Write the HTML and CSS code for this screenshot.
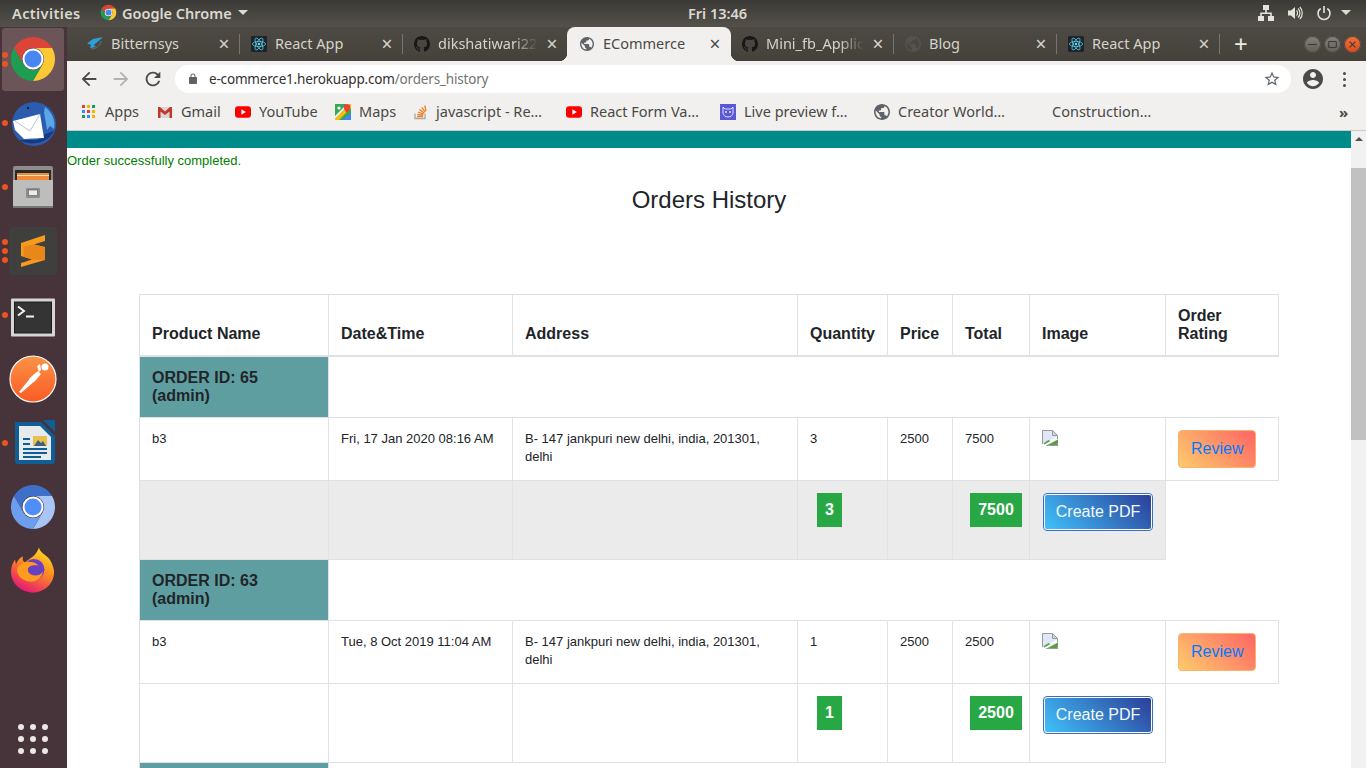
FILE: index.html
```html
<!DOCTYPE html>
<html>

<head>
    <meta charset="utf-8">
    <title>ECommerce</title>

    <link rel="stylesheet" href="styles.css">
</head>

<body>

    <svg class="icon-defs" width="0" height="0">
        <symbol id="i-chrome" viewBox="0 0 48 48">
            <path fill="#db4437" d="M4.95 13A22 22 0 0 1 43.05 13H24A11 11 0 0 0 14.47 29.5z" />
            <path fill="#fcc934" d="M43.05 13A22 22 0 0 1 24 46L33.53 29.5A11 11 0 0 0 24 13z" />
            <path fill="#1e9e50" d="M24 46A22 22 0 0 1 4.95 13L14.47 29.5A11 11 0 0 0 33.53 29.5z" />
            <circle cx="24" cy="24" r="10.5" fill="#fff" />
            <circle cx="24" cy="24" r="8.5" fill="#4a86f0" />
        </symbol>
        <symbol id="i-chromium" viewBox="0 0 48 48">
            <path fill="#3f70c9" d="M4.95 13A22 22 0 0 1 43.05 13H24A11 11 0 0 0 14.47 29.5z" />
            <path fill="#a8c5f6" d="M43.05 13A22 22 0 0 1 24 46L33.53 29.5A11 11 0 0 0 24 13z" />
            <path fill="#6d9eee" d="M24 46A22 22 0 0 1 4.95 13L14.47 29.5A11 11 0 0 0 33.53 29.5z" />
            <circle cx="24" cy="24" r="10.5" fill="#fff" />
            <circle cx="24" cy="24" r="8.5" fill="#4f8ef7" />
        </symbol>
        <symbol id="i-github" viewBox="0 0 16 16">
            <path fill="#17171a" d="M8 0C3.58 0 0 3.58 0 8c0 3.54 2.29 6.53 5.47 7.59.4.07.55-.17.55-.38 0-.19-.01-.82-.01-1.49-2.01.37-2.53-.49-2.69-.94-.09-.23-.48-.94-.82-1.13-.28-.15-.68-.52-.01-.53.63-.01 1.08.58 1.23.82.72 1.21 1.87.87 2.33.66.07-.52.28-.87.51-1.07-1.78-.2-3.64-.89-3.64-3.95 0-.87.31-1.59.82-2.15-.08-.2-.36-1.02.08-2.12 0 0 .67-.21 2.2.82.64-.18 1.32-.27 2-.27.68 0 1.36.09 2 .27 1.53-1.04 2.2-.82 2.2-.82.44 1.1.16 1.92.08 2.12.51.56.82 1.27.82 2.15 0 3.07-1.87 3.75-3.65 3.95.29.25.54.73.54 1.48 0 1.07-.01 1.93-.01 2.2 0 .21.15.46.55.38A8.013 8.013 0 0016 8c0-4.42-3.58-8-8-8z" />
        </symbol>
        <symbol id="i-react" viewBox="0 0 16 16">
            <rect width="16" height="16" rx="1" fill="#20232a" />
            <g fill="none" stroke="#61dafb" stroke-width=".7">
                <ellipse cx="8" cy="8" rx="6.6" ry="2.6" />
                <ellipse cx="8" cy="8" rx="6.6" ry="2.6" transform="rotate(60 8 8)" />
                <ellipse cx="8" cy="8" rx="6.6" ry="2.6" transform="rotate(120 8 8)" />
            </g>
            <circle cx="8" cy="8" r="1.3" fill="#61dafb" />
        </symbol>
        <symbol id="i-globe" viewBox="2 2 20 20">
            <path d="M12 2C6.48 2 2 6.48 2 12s4.48 10 10 10 10-4.48 10-10S17.52 2 12 2zm-1 17.93c-3.95-.49-7-3.85-7-7.93 0-.62.08-1.21.21-1.79L9 15v1c0 1.1.9 2 2 2v1.93zm6.9-2.54c-.26-.81-1-1.39-1.9-1.39h-1v-3c0-.55-.45-1-1-1H8v-2h2c.55 0 1-.45 1-1V7h2c1.1 0 2-.9 2-2v-.41c2.93 1.19 5 4.06 5 7.41 0 2.08-.8 3.97-2.1 5.39z" />
        </symbol>
        <symbol id="i-youtube" viewBox="0 0 16 16">
            <rect y="2.2" width="16" height="11.6" rx="3" fill="#f00" />
            <path fill="#fff" d="M6.4 5.3 10.8 8l-4.4 2.7z" />
        </symbol>
        <symbol id="i-broken" viewBox="0 0 16 16">
            <path fill="#c6d6f1" d="M0 0h10.5L16 5.500V16H0z" />
            <path fill="#fff" d="M1 1h9v5h5v1L1 12z" opacity=".45" />
            <path fill="#fff" d="M0 14 16 6v3L3 16H0z" />
            <path fill="#5f9e3e" d="M4 16l12-6.500V16zM1.500 13.500l5-3.500 2 1-6 3.500z" />
            <path fill="none" stroke="#9b9b9b" d="M.5 14V.5h10l5 5V9M15.500 13v2.500H6M10.500.5v5h5" />
        </symbol>
    </svg>

    <div class="screen">

        <header class="topbar">
            <span class="topbar-activities">Activities</span>
            <span class="topbar-app">
                <svg class="topbar-logo"><use href="#i-chrome" /></svg>
                Google Chrome
                <i class="caret"></i>
            </span>
            <span class="topbar-clock">Fri 13:46</span>
            <span class="topbar-status">
                <svg class="status-icon" viewBox="0 0 16 16" fill="#e6e3dc">
                    <path d="M5 0h6v5H8.800v2.500h5V11H16v5h-6v-5h2.200V9H3.800v2H6v5H0v-5h2.200V7.500h5V5H5z" />
                </svg>
                <svg class="status-icon" viewBox="0 0 16 16" fill="#e6e3dc">
                    <path d="M1 5.500h3L8 2v12l-4-3.500H1z" />
                    <path d="M9.500 5.500c1.400 1.200 1.400 3.800 0 5M11 3.500c2.600 2.300 2.600 6.700 0 9M12.800 2c3.300 3 3.300 9 0 12" fill="none" stroke="#e6e3dc" stroke-width="1.200" />
                </svg>
                <svg class="status-icon" viewBox="0 0 16 16" fill="none" stroke="#e6e3dc" stroke-width="1.600">
                    <path d="M4.700 3.500a6 6 0 1 0 6.600 0M8 1v7" />
                </svg>
                <i class="caret"></i>
            </span>
        </header>

        <div class="desktop">

            <aside class="dock">
                <div class="dock-item is-running">
                    <i class="dot dot-a"></i><i class="dot dot-b"></i>
                    <svg class="dock-icon"><use href="#i-chrome" /></svg>
                </div>
                <div class="dock-item">
                    <i class="dot"></i>
                    <svg class="dock-icon" viewBox="0 0 48 48">
                        <circle cx="25" cy="25" r="22" fill="#2a5db0" />
                        <path fill="#17397f" d="M10 41c10 6 28 5 35-9l-9 3-8 6z" />
                        <path fill="#5aa6e6" d="M36 8c7 5 11 14 9 22l-4-3-3 4-3-18z" />
                        <path fill="#fff" d="M4 22 31 15l4 24-20 1-9-9z" />
                        <path fill="none" stroke="#b9c4d2" d="M6 22l15 10 10-17" />
                        <path fill="#2a5db0" d="M9 12c4-8 15-9 21-5l-7 7-11 6z" />
                        <circle cx="19" cy="9" r="1.200" fill="#0c1d3c" />
                    </svg>
                </div>
                <div class="dock-item">
                    <i class="dot"></i>
                    <svg class="dock-icon" viewBox="0 0 48 48">
                        <rect x="4" y="3" width="40" height="42" rx="2" fill="#8d8d8d" />
                        <rect x="6" y="7" width="36" height="14" fill="#2b2a28" />
                        <rect x="8" y="10" width="32" height="8" fill="#ec8b3a" />
                        <rect x="8" y="12" width="32" height="1" fill="#fbe0b8" />
                        <rect x="4" y="17" width="40" height="28" fill="#bdbdbb" />
                        <rect x="4" y="43" width="40" height="2" fill="#77777a" />
                        <rect x="17" y="25" width="14" height="10" rx="1" fill="#8e8e8e" />
                        <rect x="19.500" y="27" width="9" height="5.500" fill="#ececec" stroke="#55555a" stroke-width=".6" />
                    </svg>
                </div>
                <div class="dock-item">
                    <i class="dot dot-top"></i><i class="dot"></i><i class="dot dot-bottom"></i>
                    <svg class="dock-icon" viewBox="0 0 48 48">
                        <rect width="48" height="48" rx="4" fill="#3f3f3e" />
                        <path fill="#f79a1e" d="M36 8 12 16V29L23 32.500 12 36V40L36 33V20L25 17.500 36 14z" />
                        <path fill="#e8871a" d="M14.500 19.500 25 17.500 36 20V33L23 32.500 14.500 29.800z" />
                    </svg>
                </div>
                <div class="dock-item">
                    <i class="dot"></i>
                    <svg class="dock-icon" viewBox="0 -2.500 48 48">
                        <rect x="2" y="5" width="44" height="38" rx="1" fill="#d6d6d4" />
                        <rect x="5" y="8" width="38" height="32" fill="#1c1c1c" />
                        <rect x="6" y="9" width="36" height="30" fill="#343434" />
                        <path fill="none" stroke="#f2f2f2" stroke-width="2" d="M9 13l6 4.500-6 4.500" />
                        <rect x="17" y="22" width="8" height="2" fill="#f2f2f2" />
                    </svg>
                </div>
                <div class="dock-item">
                    <svg class="dock-icon" viewBox="0 0 48 48">
                        <defs>
                            <linearGradient id="g-postman" x1="0" y1="0" x2="0" y2="1">
                                <stop offset="0" stop-color="#fb9346" />
                                <stop offset="1" stop-color="#fb5b24" />
                            </linearGradient>
                        </defs>
                        <circle cx="24" cy="24" r="23" fill="url(#g-postman)" stroke="#fff" stroke-width="1.200" />
                        <path fill="#fff" d="M10 37l13-16 6-5 3 3-5 6-15 13zM28 11l3-2 1 6-2 2zM23 21l4 4-2 2-5-3z" />
                        <circle cx="36" cy="12" r="3.500" fill="#fff" />
                    </svg>
                </div>
                <div class="dock-item">
                    <i class="dot"></i>
                    <svg class="dock-icon" viewBox="0 0 48 48">
                        <path fill="#0f5f96" d="M6 3h26l14 14v25a3 3 0 0 1-3 3H9a3 3 0 0 1-3-3z" />
                        <path fill="#0f5f96" d="M34 1h12v12z" />
                        <path fill="#e8ebee" d="M10 7h21l11 11v23H10z" />
                        <path fill="#0f5f96" d="M14 19h7v2h-7zM14 24h7v2h-7zM14 29h24v2H14zM14 33h24v2H14zM14 37h18v2H14z" />
                        <rect x="24" y="17" width="14" height="10" fill="#e8c04c" />
                        <path fill="#3e5f7f" d="M25 27l4-6 3 3 2-2 3 5z" />
                    </svg>
                </div>
                <div class="dock-item">
                    <svg class="dock-icon"><use href="#i-chromium" /></svg>
                </div>
                <div class="dock-item">
                    <svg class="dock-icon" viewBox="0 1.500 48 48">
                        <defs>
                            <linearGradient id="g-fox" x1="0.800" y1="0" x2="0.300" y2="1">
                                <stop offset="0" stop-color="#ffe226" />
                                <stop offset=".45" stop-color="#ff8a1f" />
                                <stop offset="1" stop-color="#e3137a" />
                            </linearGradient>
                        </defs>
                        <path fill="url(#g-fox)" d="M30 2c1 5 5 6 9 10 3 3 5 8 6 13 1 12-9 22-21 22C12 47 2 38 2 26c0-5 2-9 4-12l1 5c1-4 4-7 7-8-1 3 0 5 2 6 4-4 11-6 14-15z" />
                        <circle cx="25" cy="24" r="10.500" fill="#6a3fc2" />
                        <path fill="#ff9c1f" d="M8 24c2-7 10-9 17-7l5 3c-6-1-10 0-11 3-1 4 3 7 7 7 3 0 6-1 8-4-1 7-8 11-14 10C13 35 8 30 8 24z" />
                    </svg>
                </div>
                <div class="dock-apps">
                    <i></i><i></i><i></i><i></i><i></i><i></i><i></i><i></i><i></i>
                </div>
            </aside>

            <div class="chrome-window">

                <div class="tabstrip">
                    <div class="tab tab-first">
                        <svg class="tab-icon" viewBox="0 0 16 16">
                            <path fill="#2c9fd8" d="M16 1 6 3 0 7.500l4 1.300L3 12c3 0 5-1 6-2l-2.500-.5C9 7 13 4 16 1z" />
                            <path fill="none" stroke="#5d7f92" stroke-width=".8" d="M14 5c-1 5-5 8-10 8" />
                        </svg>
                        <span class="tab-title">Bitternsys</span>
                        <span class="tab-close">×</span>
                    </div>
                    <div class="tab">
                        <svg class="tab-icon"><use href="#i-react" /></svg>
                        <span class="tab-title">React App</span>
                        <span class="tab-close">×</span>
                    </div>
                    <div class="tab tab-before-active">
                        <svg class="tab-icon"><use href="#i-github" /></svg>
                        <span class="tab-title tab-fade">dikshatiwari22</span>
                        <span class="tab-close">×</span>
                    </div>
                    <div class="tab tab-active">
                        <svg class="tab-icon tab-globe"><use href="#i-globe" /></svg>
                        <span class="tab-title">ECommerce</span>
                        <span class="tab-close">×</span>
                    </div>
                    <div class="tab">
                        <svg class="tab-icon"><use href="#i-github" /></svg>
                        <span class="tab-title tab-fade">Mini_fb_Applic</span>
                        <span class="tab-close">×</span>
                    </div>
                    <div class="tab">
                        <svg class="tab-icon tab-globe-dim"><use href="#i-globe" /></svg>
                        <span class="tab-title">Blog</span>
                        <span class="tab-close">×</span>
                    </div>
                    <div class="tab">
                        <svg class="tab-icon"><use href="#i-react" /></svg>
                        <span class="tab-title">React App</span>
                        <span class="tab-close">×</span>
                    </div>
                    <span class="tab-new">+</span>
                    <div class="window-buttons">
                        <span class="window-button">
                            <svg viewBox="0 0 20 20"><path d="M5 10h10" /></svg>
                        </span>
                        <span class="window-button">
                            <svg viewBox="0 0 20 20"><rect x="5.500" y="6.500" width="9" height="7" rx="1" /></svg>
                        </span>
                        <span class="window-button window-close">
                            <svg viewBox="0 0 20 20"><path d="M6.500 6.500l7 7M13.500 6.500l-7 7" /></svg>
                        </span>
                    </div>
                </div>

                <div class="toolbar">
                    <svg class="tool-icon" viewBox="0 0 24 24"><path d="M20 11H7.830l5.590-5.590L12 4l-8 8 8 8 1.410-1.410L7.830 13H20v-2z" /></svg>
                    <svg class="tool-icon tool-disabled" viewBox="0 0 24 24"><path d="M12 4l-1.410 1.410L16.170 11H4v2h12.170l-5.580 5.590L12 20l8-8z" /></svg>
                    <svg class="tool-icon" viewBox="0 0 24 24"><path d="M17.650 6.350C16.200 4.900 14.210 4 12 4c-4.420 0-7.990 3.580-7.990 8s3.570 8 7.990 8c3.730 0 6.840-2.550 7.730-6h-2.080c-.82 2.330-3.040 4-5.650 4-3.310 0-6-2.690-6-6s2.690-6 6-6c1.660 0 3.140.69 4.220 1.780L13 11h7V4l-2.350 2.350z" /></svg>
                    <div class="omnibox">
                        <svg class="omnibox-lock" viewBox="0 0 24 24"><path d="M18 8h-1V6c0-2.760-2.240-5-5-5S7 3.240 7 6v2H6c-1.100 0-2 .9-2 2v10c0 1.100.9 2 2 2h12c1.100 0 2-.9 2-2V10c0-1.100-.9-2-2-2zM9 6c0-1.660 1.340-3 3-3s3 1.340 3 3v2H9V6z" /></svg>
                        <span class="omnibox-url">e-commerce1.herokuapp.com<span class="omnibox-path">/orders_history</span></span>
                        <svg class="omnibox-star" viewBox="0 0 24 24"><path d="M22 9.240l-7.190-.62L12 2 9.190 8.630 2 9.240l5.460 4.730L5.820 21 12 17.270 18.180 21l-1.630-7.030L22 9.240zM12 15.400l-3.760 2.270 1-4.280-3.320-2.880 4.380-.38L12 6.100l1.710 4.040 4.380.38-3.320 2.880 1 4.280L12 15.400z" /></svg>
                    </div>
                    <svg class="tool-avatar" viewBox="2 2 20 20"><path d="M12 2C6.480 2 2 6.480 2 12s4.480 10 10 10 10-4.480 10-10S17.520 2 12 2zm0 3c1.660 0 3 1.340 3 3s-1.340 3-3 3-3-1.340-3-3 1.340-3 3-3zm0 14.200c-2.500 0-4.710-1.280-6-3.220.03-1.990 4-3.080 6-3.080 1.990 0 5.970 1.090 6 3.080-1.290 1.940-3.500 3.220-6 3.220z" /></svg>
                    <div class="tool-menu"><i></i><i></i><i></i></div>
                </div>

                <div class="bookmarks">
                    <span class="bookmark">
                        <svg class="bookmark-icon" viewBox="0 0 16 16">
                            <g fill="#db4437"><rect x="1" y="1" width="3" height="3" /><rect x="6" y="1" width="3" height="3" fill="#f4b400" /><rect x="11" y="1" width="3" height="3" fill="#0f9d58" /></g>
                            <g fill="#4285f4"><rect x="1" y="6" width="3" height="3" /><rect x="6" y="6" width="3" height="3" fill="#db4437" /><rect x="11" y="6" width="3" height="3" fill="#f4b400" /></g>
                            <g fill="#0f9d58"><rect x="1" y="11" width="3" height="3" /><rect x="6" y="11" width="3" height="3" fill="#4285f4" /><rect x="11" y="11" width="3" height="3" fill="#f4b400" /></g>
                        </svg>
                        <span class="bookmark-label">Apps</span>
                    </span>
                    <span class="bookmark">
                        <svg class="bookmark-icon" viewBox="0 0 16 16">
                            <path fill="#d8d8d8" d="M2 3h12v11H2z" />
                            <path fill="#c5362b" d="M1 3h2l5 4.500L13 3h2v11h-2.500V7.500L8 11 3.500 7.500V14H1z" />
                        </svg>
                        <span class="bookmark-label">Gmail</span>
                    </span>
                    <span class="bookmark">
                        <svg class="bookmark-icon"><use href="#i-youtube" /></svg>
                        <span class="bookmark-label">YouTube</span>
                    </span>
                    <span class="bookmark">
                        <svg class="bookmark-icon" viewBox="0 0 16 16">
                            <rect width="16" height="16" fill="#34a853" />
                            <path fill="#f1f1f1" d="M0 12 12 0h3L0 15z" />
                            <path fill="#fbbc04" d="M0 15 15 0h1v4L4 16H0z" />
                            <path fill="#4285f4" d="M7 16l9-7v7z" />
                            <path fill="#ea4335" d="M12 0a3.200 3.200 0 0 0-3.200 3.200C8.800 5.600 12 9 12 9s3.200-3.400 3.200-5.800A3.200 3.200 0 0 0 12 0z" />
                            <circle cx="4" cy="4" r="1.600" fill="#fff" />
                        </svg>
                        <span class="bookmark-label">Maps</span>
                    </span>
                    <span class="bookmark">
                        <svg class="bookmark-icon bookmark-stack" viewBox="1.500 0 14 16">
                            <path fill="none" stroke="#a8a8a8" stroke-width="1.300" d="M2.500 9.500v5h10v-5" />
                            <path fill="none" stroke="#f48024" stroke-width="1.300" d="M4.500 12.500h6M4.800 10.300l5.900.9M5.500 8l5.500 2.200M7 5.600l4.700 3.400M9.300 3.400l3.400 4.600M12.300 1.500l1.200 5.500" />
                        </svg>
                        <span class="bookmark-label">javascript - Re…</span>
                    </span>
                    <span class="bookmark">
                        <svg class="bookmark-icon"><use href="#i-youtube" /></svg>
                        <span class="bookmark-label">React Form Va…</span>
                    </span>
                    <span class="bookmark">
                        <svg class="bookmark-icon" viewBox="0 0 16 16">
                            <rect width="16" height="16" fill="#5b58d6" />
                            <path fill="none" stroke="#dfe0ff" d="M3 3l2 2h6l2-2v6c0 2-2 4-5 4s-5-2-5-4z" />
                            <circle cx="6" cy="8" r="1" fill="#dfe0ff" /><circle cx="10" cy="8" r="1" fill="#dfe0ff" />
                        </svg>
                        <span class="bookmark-label">Live preview f…</span>
                    </span>
                    <span class="bookmark">
                        <svg class="bookmark-icon tab-globe"><use href="#i-globe" /></svg>
                        <span class="bookmark-label">Creator World…</span>
                    </span>
                    <span class="bookmark"><span class="bookmark-label">Construction…</span></span>
                    <span class="bookmark-more">»</span>
                </div>

                <div class="viewport">
                    <main class="page">
                        <div class="page-banner"></div>
                        <p class="flash-message">Order successfully completed.</p>
                        <h2 class="page-title">Orders History</h2>

                        <table class="orders">
                            <colgroup>
                                <col class="col-name">
                                <col class="col-date">
                                <col class="col-address">
                                <col class="col-qty">
                                <col class="col-price">
                                <col class="col-total">
                                <col class="col-image">
                                <col class="col-rating">
                            </colgroup>
                            <thead>
                                <tr>
                                    <th>Product Name</th>
                                    <th>Date&amp;Time</th>
                                    <th>Address</th>
                                    <th>Quantity</th>
                                    <th>Price</th>
                                    <th>Total</th>
                                    <th>Image</th>
                                    <th>Order Rating</th>
                                </tr>
                            </thead>
                            <tbody>
                                <tr class="order-row">
                                    <td>ORDER ID: 65 (admin)</td>
                                </tr>
                                <tr class="item-row">
                                    <td>b3</td>
                                    <td>Fri, 17 Jan 2020 08:16 AM</td>
                                    <td>B- 147 jankpuri new delhi, india, 201301, delhi</td>
                                    <td>3</td>
                                    <td>2500</td>
                                    <td>7500</td>
                                    <td><svg class="broken-image"><use href="#i-broken" /></svg></td>
                                    <td><button class="btn-review">Review</button></td>
                                </tr>
                                <tr class="summary-row summary-shaded">
                                    <td></td>
                                    <td></td>
                                    <td></td>
                                    <td><span class="badge">3</span></td>
                                    <td></td>
                                    <td><span class="badge">7500</span></td>
                                    <td><button class="btn-pdf">Create PDF</button></td>
                                </tr>
                                <tr class="order-row">
                                    <td>ORDER ID: 63 (admin)</td>
                                </tr>
                                <tr class="item-row">
                                    <td>b3</td>
                                    <td>Tue, 8 Oct 2019 11:04 AM</td>
                                    <td>B- 147 jankpuri new delhi, india, 201301, delhi</td>
                                    <td>1</td>
                                    <td>2500</td>
                                    <td>2500</td>
                                    <td><svg class="broken-image"><use href="#i-broken" /></svg></td>
                                    <td><button class="btn-review">Review</button></td>
                                </tr>
                                <tr class="summary-row">
                                    <td></td>
                                    <td></td>
                                    <td></td>
                                    <td><span class="badge">1</span></td>
                                    <td></td>
                                    <td><span class="badge">2500</span></td>
                                    <td><button class="btn-pdf">Create PDF</button></td>
                                </tr>
                                <tr class="order-row">
                                    <td>&nbsp;</td>
                                </tr>
                            </tbody>
                        </table>
                    </main>

                    <div class="scrollbar">
                        <i class="scrollbar-up"></i>
                        <div class="scrollbar-thumb"></div>
                    </div>
                </div>

            </div>
        </div>
    </div>

</body>

</html>
```

FILE: styles.css
```css
* {
    box-sizing: border-box;
}

html,
body {
    margin: 0;
    height: 100%;
    overflow: hidden;
}

body {
    font-family: "Liberation Sans", Arial, sans-serif;
    color: #212529;
}

.icon-defs {
    position: absolute;
}

.screen {
    display: flex;
    flex-direction: column;
    width: 1366px;
    height: 768px;
    overflow: hidden;
}

/* Ubuntu top bar */

.topbar {
    display: flex;
    align-items: center;
    flex: 0 0 27px;
    position: relative;
    padding: 0 15px 2px 12px;
    background: linear-gradient(#3b3a36, #54514b);
    color: #dcd9d1;
    font-family: "Noto Sans", sans-serif;
    font-size: 14.5px;
    font-weight: 600;
}

.topbar-activities {
    width: 88px;
    letter-spacing: .4px;
}

.topbar-app {
    display: flex;
    align-items: center;
}

.topbar-logo {
    width: 17px;
    height: 17px;
    margin-right: 5px;
}

.topbar-clock {
    position: absolute;
    left: 688px;
}

.topbar-status {
    display: flex;
    align-items: center;
    gap: 13px;
    margin-left: auto;
}

.status-icon {
    width: 16px;
    height: 16px;
}

.caret {
    width: 0;
    height: 0;
    margin-left: 6px;
    border: 5px solid transparent;
    border-top-color: #dcd9d1;
    border-bottom: 0;
}

.topbar-status .caret {
    margin-left: -4px;
}

.desktop {
    display: flex;
    flex: 1;
    min-height: 0;
}

/* Dock */

.dock {
    display: flex;
    flex-direction: column;
    flex: 0 0 67px;
    background: #47333a;
}

.dock-item {
    display: flex;
    justify-content: center;
    align-items: center;
    position: relative;
    flex: 0 0 64px;
    margin-right: 1px;
}

.dock-item.is-running::before {
    content: "";
    position: absolute;
    left: 2px;
    right: 2px;
    top: 1px;
    bottom: 0;
    border-radius: 3px;
    background: #6b5558;
}

.dock-icon {
    position: relative;
    width: 48px;
    height: 48px;
}

.dot {
    position: absolute;
    left: 2px;
    top: 29px;
    width: 6px;
    height: 6px;
    border-radius: 50%;
    background: #e95420;
    z-index: 1;
}

.dot-a {
    top: 25px;
}

.dot-b {
    top: 34px;
}

.dot-top {
    top: 20px;
}

.dot-bottom {
    top: 38px;
}

.dock-apps {
    display: grid;
    grid-template-columns: repeat(3, 6px);
    gap: 6px;
    margin: auto 0 14px 18px;
}

.dock-apps i {
    width: 6px;
    height: 6px;
    border-radius: 50%;
    background: #ebe8e6;
}

/* Browser window */

.chrome-window {
    display: flex;
    flex-direction: column;
    flex: 1;
    min-width: 0;
}

.tabstrip {
    display: flex;
    align-items: center;
    flex: 0 0 34px;
    padding-left: 10px;
    background: linear-gradient(#4d4a44, #44423b);
    font-family: "Noto Sans", sans-serif;
    font-size: 14.5px;
    color: #d6d3ca;
}

.tab {
    display: flex;
    align-items: center;
    position: relative;
    flex: 0 0 163px;
    min-width: 0;
    height: 20px;
    padding-left: 11px;
    border-right: 1px solid #77746d;
}

.tab-first {
    padding-left: 10px;
}

.tab-before-active {
    border-right: 0;
}

.tab-before-active .tab-close {
    margin-right: 6px;
}

.tab-active {
    flex-basis: 164px;
    height: 34px;
    margin-left: 1px;
    padding-left: 13px;
    border-right: 0;
    border-radius: 8px 8px 0 0;
    background: #f1f0ee;
    color: #4c4a48;
}

.tab-active .tab-icon {
    width: 14px;
    height: 14px;
    margin-right: 9px;
}

.tab-active .tab-close {
    margin-right: 8px;
}

.tab-active::before,
.tab-active::after {
    content: "";
    position: absolute;
    bottom: 0;
    width: 8px;
    height: 8px;
    background: radial-gradient(circle at 0 0, #45433c 8px, #f1f0ee 8.5px);
}

.tab-active::before {
    left: -8px;
}

.tab-active::after {
    right: -8px;
    background: radial-gradient(circle at 100% 0, #45433c 8px, #f1f0ee 8.5px);
}

.tab-icon {
    flex: none;
    width: 16px;
    height: 16px;
    margin-right: 8px;
}

.tab-globe {
    fill: #5f6368;
}

.tab-globe-dim {
    fill: #54524c;
}

.tab-title {
    flex: 1;
    min-width: 0;
    padding-bottom: 2px;
    overflow: hidden;
    white-space: nowrap;
}

.tab-fade {
    -webkit-mask-image: linear-gradient(to right, #000 75%, transparent 100%);
    mask-image: linear-gradient(to right, #000 75%, transparent 100%);
}

.tab-close {
    flex: none;
    width: 16px;
    margin: 0 7px 0 6px;
    text-align: center;
    font-size: 19px;
    line-height: 20px;
}

.tab-new {
    margin-left: 14px;
    font-size: 24px;
    line-height: 20px;
    color: #ecebe6;
}

.window-buttons {
    display: flex;
    gap: 3px;
    margin-left: auto;
    padding-right: 5px;
}

.window-button {
    width: 17px;
    height: 17px;
    border-radius: 50%;
    background: linear-gradient(#85827b, #5e5c55);
    box-shadow: inset 0 0 0 1px #4a4841;
}

.window-button svg {
    display: block;
    fill: none;
    stroke: #3b3a36;
    stroke-width: 1.300;
}

.window-close {
    background: linear-gradient(#f0703c, #d94d1c);
}

.toolbar {
    display: flex;
    align-items: center;
    flex: 0 0 32px;
    padding-top: 4px;
    background: #f1f0ee;
}

.tool-icon {
    flex: none;
    width: 22px;
    height: 22px;
    margin-left: 10px;
    fill: #4a4a4a;
}

.toolbar .tool-icon:first-child {
    margin-left: 11px;
}

.tool-disabled {
    fill: #b2b2b2;
}

.omnibox {
    display: flex;
    align-items: center;
    flex: 1;
    height: 28px;
    margin-left: 11px;
    padding: 0 10px 0 12px;
    border-radius: 14px;
    background: #fff;
    font-family: "Noto Sans", sans-serif;
    font-size: 13.5px;
    letter-spacing: -.18px;
}

.omnibox-lock {
    width: 12px;
    height: 14px;
    margin-right: 10px;
    fill: #5f6368;
}

.omnibox-url {
    flex: 1;
    color: #34322f;
}

.omnibox-path {
    color: #75736f;
}

.omnibox-star {
    width: 18px;
    height: 18px;
    fill: #5f6368;
}

.tool-avatar {
    flex: none;
    width: 20px;
    height: 20px;
    margin-left: 12px;
    fill: #4a4a4a;
}

.tool-menu {
    display: flex;
    flex-direction: column;
    gap: 3px;
    margin: 0 20px 0 20px;
}

.tool-menu i {
    width: 3px;
    height: 3px;
    border-radius: 50%;
    background: #4a4a4a;
}

.bookmarks {
    display: grid;
    grid-template-columns: 76px 78px 100px 79px 152px 154px 154px 178px 287px 1fr;
    align-items: center;
    flex: 0 0 38px;
    padding-left: 14px;
    border-bottom: 1px solid #c9c8c5;
    background: #f1f0ee;
    font-family: "Noto Sans", sans-serif;
    font-size: 14.5px;
    color: #4a4845;
}

.bookmark {
    display: flex;
    align-items: center;
    gap: 8px;
    white-space: nowrap;
}

.bookmark-label {
    margin-top: -2px;
}

.bookmark-icon {
    flex: none;
    width: 16px;
    height: 16px;
}

.bookmark-stack {
    width: 14px;
}

.bookmark-more {
    font-size: 15px;
    font-weight: 700;
}

/* Page inside the browser */

.viewport {
    display: flex;
    flex: 1;
    min-height: 0;
    overflow: hidden;
}

.page {
    flex: 1;
    min-width: 0;
    background: #fff;
}

.page-banner {
    height: 17px;
    background: darkcyan;
}

.flash-message {
    margin: 5px 0 0;
    font-size: 13px;
    line-height: 15px;
    color: green;
}

.page-title {
    margin: 18px 0 80px;
    text-align: center;
    font-size: 24px;
    font-weight: 400;
    line-height: 28px;
}

.orders {
    width: 1139px;
    margin: 0 0 0 72px;
    table-layout: fixed;
    border-collapse: collapse;
    font-size: 13px;
    line-height: 18px;
}

.col-name { width: 189px; }
.col-date { width: 184px; }
.col-address { width: 285px; }
.col-qty { width: 90px; }
.col-price { width: 65px; }
.col-total { width: 77px; }
.col-image { width: 136px; }
.col-rating { width: 113px; }

.orders th,
.orders td {
    padding: 12px;
    vertical-align: top;
    border: 1px solid #dee2e6;
    text-align: left;
}

.orders th {
    vertical-align: bottom;
    border-bottom-width: 2px;
    font-size: 16px;
}

.order-row td {
    height: 60px;
    background: cadetblue;
    font-size: 16px;
    font-weight: 700;
}

.item-row td {
    height: 63px;
}

.summary-row td {
    height: 79px;
}

.summary-shaded td {
    background: #ebebeb;
}

.broken-image {
    display: block;
    width: 16px;
    height: 16px;
}

.badge {
    display: inline-block;
    height: 34px;
    padding: 0 8px;
    margin-left: 7px;
    background: #28a745;
    color: #fff;
    font-size: 16px;
    font-weight: 700;
    line-height: 33px;
}

.summary-row td:nth-child(6) .badge {
    margin-left: 5px;
    padding: 0 8.2px;
}

.btn-review {
    display: block;
    height: 38px;
    padding: 0 12px;
    border: 1px solid #f8b46e;
    border-radius: 4px;
    background: linear-gradient(45deg, #fccb6b, #ff6565);
    color: #007bff;
    font-family: inherit;
    font-size: 16px;
}

.btn-pdf {
    display: block;
    width: 110px;
    height: 38px;
    margin-left: 1px;
    padding: 0;
    border: 2px solid #fff;
    border-radius: 4px;
    outline: 1px solid #3b6fb8;
    outline-offset: -1px;
    background: linear-gradient(45deg, #3fc1f9, #2c3e9a);
    color: #f4f8fb;
    font-family: inherit;
    font-size: 16px;
}

/* Scrollbar */

.scrollbar {
    flex: 0 0 15px;
    padding-top: 6px;
    background: #f1f1f1;
}

.scrollbar-up {
    display: block;
    width: 0;
    height: 0;
    margin: 0 auto;
    border: 4px solid transparent;
    border-bottom-color: #505050;
    border-top: 0;
}

.scrollbar-thumb {
    height: 272px;
    margin-top: 27px;
    background: #c1c1c1;
}
```
